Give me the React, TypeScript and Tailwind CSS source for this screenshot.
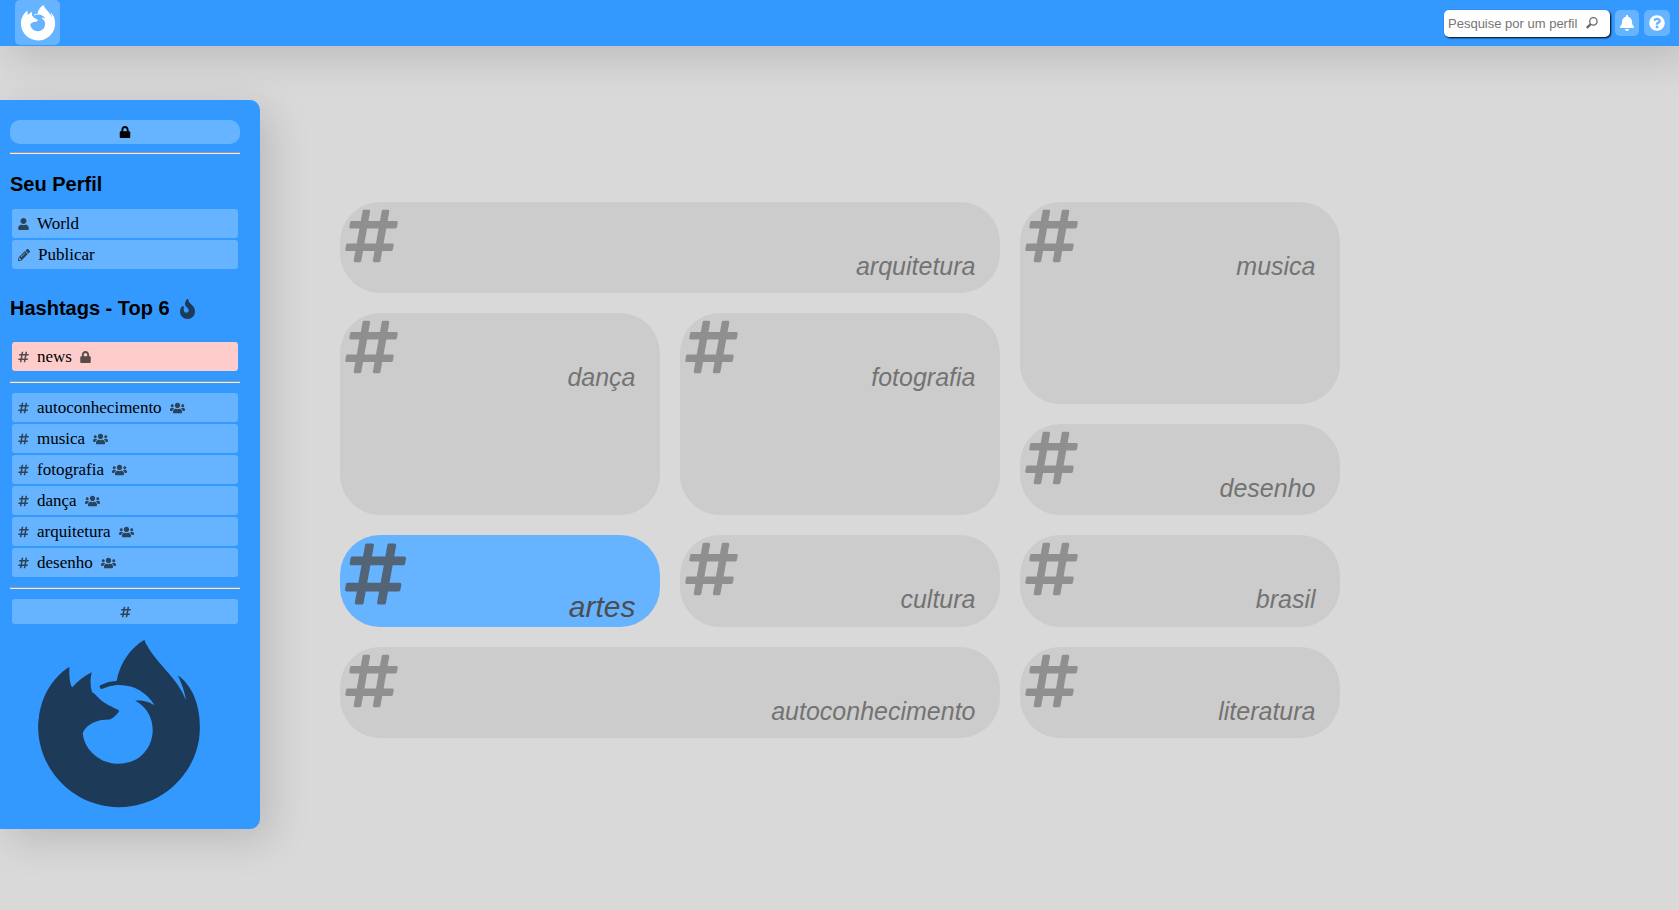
import React from "react";
import {
  FaBell,
  FaFire,
  FaFirefoxBrowser,
  FaHashtag,
  FaLock,
  FaPencilAlt,
  FaQuestionCircle,
  FaUser,
  FaUsers,
} from "react-icons/fa";

const topTags = ["autoconhecimento", "musica", "fotografia", "dança", "arquitetura", "desenho"];

const cards = [
  { name: "arquitetura", span: "col-span-2" },
  { name: "musica", span: "row-span-2" },
  { name: "dança", span: "row-span-2" },
  { name: "fotografia", span: "row-span-2" },
  { name: "desenho", span: "" },
  { name: "artes", span: "", active: true },
  { name: "cultura", span: "" },
  { name: "brasil", span: "" },
  { name: "autoconhecimento", span: "col-span-2" },
  { name: "literatura", span: "" },
];

const narrowIcon = "h-3 w-[11px] text-[#141414] opacity-70";
const squareIcon = "size-3 text-[#141414] opacity-70";
const wideIcon = "h-3 w-[15px] text-[#141414] opacity-70";

function Divider() {
  return <hr className="border-t border-b border-t-[#9a9a9a] border-b-[#eeeeee]" />;
}

function Magnifier() {
  return (
    <svg
      viewBox="0 0 12 12"
      className="pointer-events-none absolute right-3 top-[7px] size-3 text-[#6b6b6b]"
      fill="none"
      stroke="currentColor"
      aria-hidden="true"
    >
      <circle cx="7.4" cy="4.4" r="3.7" strokeWidth="1.3" />
      <path d="M4.8 7 3.8 8" strokeWidth="1.4" />
      <path d="M4.2 7.6 0.8 11" strokeWidth="2.4" />
    </svg>
  );
}

function SideLink({
  icon,
  label,
  trailing,
  tone = "bg-[#66b3ff]",
}: {
  icon: React.ReactNode;
  label: string;
  trailing?: React.ReactNode;
  tone?: string;
}) {
  return (
    <a
      href="#"
      className={`mx-0.5 flex h-[29px] items-center gap-2 rounded-[3px] pl-1.5 pt-px font-['Liberation_Serif',serif] text-[17px] text-black ${tone}`}
    >
      {icon}
      <span>{label}</span>
      {trailing}
    </a>
  );
}

export default function App() {
  return (
    <div className="min-h-screen bg-[#d9d9d9] pb-20 font-['Liberation_Sans',Arial,sans-serif] text-black">
      <header className="flex h-[46px] justify-between bg-[#3399ff] pl-[15px] pr-[9px] shadow-[10px_10px_40px_rgba(0,0,0,0.15)]">
        <a
          href="#"
          aria-label="Início"
          className="flex size-[45px] items-center justify-center rounded-[5px] bg-[#66b3ff] text-white"
        >
          <FaFirefoxBrowser className="size-9" />
        </a>
        <div className="flex items-start gap-[5px] pt-2.5">
          <div className="relative">
            <input
              type="search"
              aria-label="Pesquisar perfil"
              placeholder="Pesquise por um perfil"
              className="block h-[27px] w-[166px] rounded-[5px] bg-white px-1 text-[13px] shadow-[1px_1px_2px_#000] placeholder:text-[#757575]"
            />
            <Magnifier />
          </div>
          <button
            type="button"
            aria-label="Notificações"
            className="flex h-[26px] w-6 items-center justify-center rounded-[5px] bg-[#66b3ff] text-base text-white"
          >
            <FaBell />
          </button>
          <button
            type="button"
            aria-label="Ajuda"
            className="flex size-[26px] items-center justify-center rounded-[5px] bg-[#66b3ff] text-base text-white"
          >
            <FaQuestionCircle />
          </button>
        </div>
      </header>

      <div className="grid grid-cols-[260px_1fr_260px] items-start pt-[54px]">
        <aside className="rounded-r-[10px] bg-[#3399ff] pb-[19px] pl-2.5 pr-5 pt-5 shadow-[10px_10px_40px_rgba(0,0,0,0.15)]">
          <button
            type="button"
            aria-label="Privado"
            className="mb-2 flex h-6 w-full items-center justify-center rounded-[10px] bg-[#66b3ff]"
          >
            <FaLock className="size-3" />
          </button>
          <Divider />

          <h2 className="mb-3 mt-[18px] text-xl leading-[25px] font-bold">Seu Perfil</h2>
          <nav aria-label="Perfil" className="flex flex-col gap-0.5">
            <SideLink icon={<FaUser className={narrowIcon} />} label="World" />
            <SideLink icon={<FaPencilAlt className={squareIcon} />} label="Publicar" />
          </nav>

          <h2 className="mb-[21px] mt-[27px] flex items-center gap-2.5 text-xl leading-[25px] font-bold">
            Hashtags - Top 6
            <FaFire className="h-5 w-[15px] text-[#141414] opacity-70" />
          </h2>
          <SideLink
            icon={<FaHashtag className={narrowIcon} />}
            label="news"
            trailing={<FaLock className={narrowIcon} />}
            tone="bg-[#ffcccc]"
          />
          <div className="py-2.5">
            <Divider />
          </div>
          <nav aria-label="Hashtags" className="flex flex-col gap-0.5">
            {topTags.map((tag) => (
              <SideLink
                key={tag}
                icon={<FaHashtag className={narrowIcon} />}
                label={tag}
                trailing={<FaUsers className={wideIcon} />}
              />
            ))}
          </nav>
          <div className="py-2.5">
            <Divider />
          </div>
          <div className="px-0.5">
            <button
              type="button"
              aria-label="Ver hashtags"
              className="flex h-[25px] w-full items-center justify-center rounded-[3px] bg-[#66b3ff]"
            >
              <FaHashtag className={narrowIcon} />
            </button>
          </div>
          <FaFirefoxBrowser className="ml-6 mt-4 size-[170px] text-[#141414] opacity-70" />
        </aside>

        <main className="mx-auto grid w-full max-w-[1000px] auto-rows-[minmax(91px,auto)] grid-cols-3 gap-5 pt-[102px]">
          {cards.map((card) => (
            <a
              key={card.name}
              href="#"
              className={`flex flex-col rounded-[40px] pl-[5px] pr-6 pt-1 italic ${card.span} ${
                card.active
                  ? "bg-[#66b3ff] pb-1 text-[30px] leading-[33px] text-[#4d4d4d]"
                  : "bg-[#cccccc] text-[25px] leading-[30px] text-[#737373]"
              }`}
            >
              <FaHashtag
                className={
                  card.active
                    ? "h-[70px] w-[61px] text-[#526475]"
                    : "h-[60px] w-[53px] text-[#8f8f8f]"
                }
              />
              <span className={card.active ? "-mt-[19px] self-end" : "-mt-[15px] self-end"}>
                {card.name}
              </span>
            </a>
          ))}
        </main>
      </div>
    </div>
  );
}
